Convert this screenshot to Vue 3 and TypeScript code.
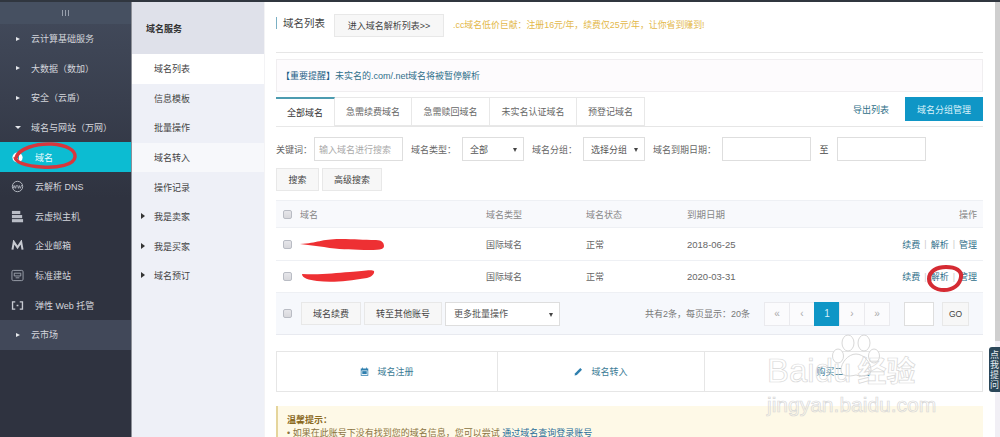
<script setup lang="ts">
type Nav = { label: string; kind: 'group' | 'open' | 'item' | 'active' | 'market'; icon?: string };

const navItems: Nav[] = [
  { label: '云计算基础服务', kind: 'group' },
  { label: '大数据（数加）', kind: 'group' },
  { label: '安全（云盾）', kind: 'group' },
  { label: '域名与网站（万网）', kind: 'open' },
  { label: '域名', kind: 'active', icon: 'domain' },
  { label: '云解析 DNS', kind: 'item', icon: 'dns' },
  { label: '云虚拟主机', kind: 'item', icon: 'host' },
  { label: '企业邮箱', kind: 'item', icon: 'mail' },
  { label: '标准建站', kind: 'item', icon: 'site' },
  { label: '弹性 Web 托管', kind: 'item', icon: 'web' },
  { label: '云市场', kind: 'market' },
];

const subItems = [
  { label: '域名列表', current: true },
  { label: '信息模板' },
  { label: '批量操作' },
  { label: '域名转入', light: true },
  { label: '操作记录' },
  { label: '我是卖家', arrow: true },
  { label: '我是买家', arrow: true },
  { label: '域名预订', arrow: true },
];

const tabs = [
  { label: '全部域名', w: 59 },
  { label: '急需续费域名', w: 77 },
  { label: '急需赎回域名', w: 78 },
  { label: '未实名认证域名', w: 87 },
  { label: '预登记域名', w: 68 },
];

const rows = [
  { date: '2018-06-25', h: 33 },
  { date: '2020-03-31', h: 32 },
];

const pages = ['«', '‹', '1', '›', '»'];
</script>

<template>
  <div class="page">
    <aside class="nav">
      <div class="toggle">
        <i></i><i></i><i></i>
      </div>
      <div v-for="n in navItems" :key="n.label" class="nav-row" :class="n.kind">
        <span v-if="n.kind === 'group' || n.kind === 'market'" class="tri"></span>
        <span v-else-if="n.kind === 'open'" class="tri down"></span>
        <span v-else class="nav-icon">
          <svg v-if="n.icon === 'domain'" viewBox="0 0 14 14" width="13" height="13">
            <circle cx="7" cy="7" r="5.5" fill="#fff" />
            <path d="M6 3.5v7M8 4.5v5" stroke="#12b5cf" stroke-width="1.1" />
          </svg>
          <svg v-else-if="n.icon === 'dns'" viewBox="0 0 14 14" width="13" height="13" fill="none" stroke="#b9bdc6" stroke-width="1">
            <circle cx="7" cy="7" r="5.6" />
            <path d="M2 5.5l1 3.5 1-3 1 3 1-3.500M7 5.500l1 3.500 1-3 1 3 1.500-3.500" stroke-width=".8" />
          </svg>
          <svg v-else-if="n.icon === 'host'" viewBox="0 0 14 14" width="13" height="13" fill="#b9bdc6">
            <rect x="1" y="1" width="9" height="3.400" />
            <rect x="1" y="5.400" width="11" height="3.400" />
            <rect x="1" y="9.800" width="12" height="3.400" />
          </svg>
          <svg v-else-if="n.icon === 'mail'" viewBox="0 0 14 12" width="13" height="11" fill="none" stroke="#c8cbd2" stroke-width="2.200">
            <path d="M1.500 10.500L3 2l4 6 4-6 1.500 8.500" />
          </svg>
          <svg v-else-if="n.icon === 'site'" viewBox="0 0 14 14" width="13" height="13" fill="none" stroke="#9ea3ae" stroke-width="1">
            <rect x="1" y="1.500" width="12" height="11" rx="1.500" />
            <path d="M3.500 4.500h7v3h-7zM5 9.500h4" />
          </svg>
          <svg v-else viewBox="0 0 14 10" width="13" height="9" fill="none" stroke="#c8cbd2" stroke-width="1.500">
            <path d="M4.500 1H1.500v8h3M9.500 1h3v8h-3M6 5h2" />
          </svg>
        </span>
        <span class="nav-label">{{ n.label }}</span>
      </div>
    </aside>

    <aside class="sub">
      <div class="sub-head">域名服务</div>
      <div
        v-for="s in subItems"
        :key="s.label"
        class="sub-row"
        :class="{ current: s.current, light: s.light }"
      >
        <span v-if="s.arrow" class="sub-tri"></span>
        {{ s.label }}
      </div>
    </aside>

    <main class="main">
      <div class="head">
        <h1 class="title">域名列表</h1>
        <button class="btn enter">进入域名解析列表&gt;&gt;</button>
        <span class="promo">.cc域名低价巨献：注册16元/年，续费仅25元/年，让你省到赚到!</span>
      </div>

      <div class="notice"><b>【重要提醒】</b>未实名的.com/.net域名将被暂停解析</div>

      <div class="tabbar">
        <div
          v-for="(t, i) in tabs"
          :key="t.label"
          class="tab"
          :class="{ on: i === 0 }"
          :style="{ width: t.w + 'px' }"
        >{{ t.label }}</div>
        <div class="tab-tools">
          <a class="export">导出列表</a>
          <button class="group-btn">域名分组管理</button>
        </div>
      </div>

      <div class="filters">
        <label class="lb l1">关键词：</label>
        <div class="field kw">输入域名进行搜索</div>
        <label class="lb l2">域名类型：</label>
        <div class="field sel">全部<span class="caret"></span></div>
        <label class="lb l2">域名分组：</label>
        <div class="field sel">选择分组<span class="caret"></span></div>
        <label class="lb l2">域名到期日期：</label>
        <div class="field date"></div>
        <span class="to">至</span>
        <div class="field date"></div>
      </div>

      <div class="search-row">
        <button class="btn search">搜索</button>
        <button class="btn adv">高级搜索</button>
      </div>

      <div class="table">
        <div class="tr th">
          <span class="cb"></span>
          <span class="c-name">域名</span>
          <span class="c-type">域名类型</span>
          <span class="c-state">域名状态</span>
          <span class="c-date">到期日期</span>
          <span class="c-op">操作</span>
        </div>
        <div v-for="r in rows" :key="r.date" class="tr td" :style="{ height: r.h + 'px' }">
          <span class="cb"></span>
          <span class="c-name"></span>
          <span class="c-type">国际域名</span>
          <span class="c-state">正常</span>
          <span class="c-date">{{ r.date }}</span>
          <span class="c-op"><a>续费</a><em>|</em><a>解析</a><em>|</em><a>管理</a></span>
        </div>
        <div class="tr foot">
          <span class="cb"></span>
          <button class="btn renew">域名续费</button>
          <button class="btn move">转至其他账号</button>
          <div class="field batch">更多批量操作<span class="caret"></span></div>
          <span class="total">共有2条，每页显示：20条</span>
          <div class="pager">
            <span v-for="p in pages" :key="p" class="pg" :class="{ on: p === '1' }">{{ p }}</span>
          </div>
          <div class="field jump"></div>
          <button class="btn go">GO</button>
        </div>
      </div>

      <div class="actions">
        <div class="act a1">
          <svg viewBox="0 0 12 12" width="9" height="9" fill="#2f7fae">
            <path d="M1 2h2V.8h1V2h4V.8h1V2h2v9.500H1zM2 4.500v6h8v-6z" />
            <path d="M3 5.500h6v4H3z" />
          </svg>
          域名注册
        </div>
        <div class="act a2">
          <svg viewBox="0 0 12 12" width="9" height="9" fill="#2f7fae">
            <path d="M.8 11.200l.7-3L8.400 1.300l2.300 2.300-6.900 6.900z" />
          </svg>
          域名转入
        </div>
        <div class="act a3">购买二手域名</div>
      </div>

      <div class="tips">
        <b>温馨提示：</b>
        <p>• 如果在此账号下没有找到您的域名信息，您可以尝试 <a>通过域名查询登录账号</a></p>
      </div>
    </main>

    <div class="scroll"></div>

    <!-- hand drawn marks on top of the screenshot -->
    <svg class="marks" width="1000" height="437" viewBox="0 0 1000 437" fill="none">
      <path d="M16 158c2-9 20-15 36-14 14 1 24 6 23 13-1 8-17 11-33 10-15-1-26-4-27-10" stroke="#d8363c" stroke-width="3.500" />
      <path d="M300 244c18-1 21-5 40-5 16 0 22 1 36 1 6 0 8 3 8 6 0 4-5 4-20 4-16-1-24 0-40-3-8-1-16-2-24-3z" fill="#ee3033" />
      <path d="M302 274c20 1 32-1 48-2 12-1 22-3 24-1 1 3-3 6-7 7-20 3-34 5-50 3-8-1-15-3-15-7z" fill="#ee3033" />
      <path d="M929 279c0-8 8-12 17-12 10 0 16 4 15 10-1 8-8 13-17 13-9 0-15-5-15-11z" stroke="#d52b33" stroke-width="4" />
    </svg>

    <div class="help">点我提问</div>

    <div class="mark">
      <svg class="paw" viewBox="0 0 50 46" width="50" height="46" fill="#fff" stroke="#d8d8d8" stroke-width="1">
        <ellipse cx="17" cy="10" rx="6" ry="8" />
        <ellipse cx="33" cy="10" rx="6" ry="8" />
        <ellipse cx="7" cy="23" rx="5.500" ry="7" />
        <ellipse cx="43" cy="23" rx="5.500" ry="7" />
        <path d="M25 21c8 0 15 9 15 16 0 6-7 7-15 5-8 2-15 1-15-5 0-7 7-16 15-16z" />
      </svg>
      <div class="mark-top">Bai<span class="gap"></span>du<span class="cn">经验</span></div>
      <div class="mark-url">jingyan.baidu.com</div>
    </div>
  </div>
</template>

<style>
html,
body {
  margin: 0;
  background: #fff;
}
</style>

<style scoped>
.page {
  position: relative;
  display: flex;
  width: 1000px;
  height: 437px;
  overflow: hidden;
  border-top: 2px solid #30363f;
  box-sizing: border-box;
  background: #fff;
  font-family: "Liberation Sans", "Noto Sans CJK SC", sans-serif;
  font-size: 9px;
  color: #555;
}
button {
  font: inherit;
  margin: 0;
}

/* left nav */
.nav {
  flex: none;
  width: 131px;
  background: linear-gradient(#434b5c, #2f3340 45%, #2f3340);
  border-right: 1px solid #8d9098;
  color: #d4d6dc;
}
.toggle {
  height: 22px;
  display: flex;
  justify-content: center;
  align-items: center;
  gap: 2px;
  background: #465061;
}
.toggle i {
  width: 1px;
  height: 6px;
  background: #98a0ad;
}
.nav-row {
  height: 29.6px;
  display: flex;
  align-items: center;
  padding-left: 16px;
}
.nav-row.item,
.nav-row.active {
  padding-left: 11px;
}
.nav-row.active {
  background: #0cbcd2;
  color: #e8fbff;
}
.nav-row.market {
  background: #414859;
}
.tri {
  width: 0;
  height: 0;
  margin-right: 11px;
  border-left: 4px solid #e6e8ec;
  border-top: 2.500px solid transparent;
  border-bottom: 2.500px solid transparent;
}
.tri.down {
  margin-right: 10px;
  margin-left: -1px;
  border-top: 3px solid #e6e8ec;
  border-bottom: 0;
  border-left: 3px solid transparent;
  border-right: 3px solid transparent;
}
.nav-icon {
  width: 13px;
  height: 13px;
  margin-right: 11px;
  display: flex;
  align-items: center;
  justify-content: center;
}

/* second column */
.sub {
  flex: none;
  width: 133px;
  background: #eef0f7;
  border-right: 1px solid #f3f3f5;
  box-sizing: border-box;
  color: #444;
}
.sub-head {
  height: 52px;
  display: flex;
  align-items: center;
  padding-left: 14px;
  background: #dfe1ea;
  font-weight: bold;
  color: #333;
}
.sub-row {
  position: relative;
  height: 29.6px;
  display: flex;
  align-items: center;
  padding-left: 22px;
}
.sub-row.current {
  background: #fff;
}
.sub-row.light {
  background: #f7f8fb;
}
.sub-tri {
  position: absolute;
  left: 9px;
  top: 11px;
  border-left: 4px solid #333;
  border-top: 3px solid transparent;
  border-bottom: 3px solid transparent;
}

/* main */
.main {
  flex: none;
  width: 718px;
  padding-left: 11px;
  box-sizing: border-box;
}
.head {
  height: 51px;
  display: flex;
  align-items: flex-start;
  padding-top: 12px;
  box-sizing: border-box;
  border-bottom: 1px solid #e6e6e6;
}
.title {
  margin: 3px 0 0;
  padding-left: 6px;
  width: 51px;
  height: 12px;
  line-height: 12px;
  box-sizing: content-box;
  flex: none;
  border-left: 1px solid #7bb0c4;
  font-size: 10.500px;
  font-weight: normal;
  color: #444;
}
.btn {
  height: 23px;
  padding: 0;
  background: #f7f7f7;
  border: 1px solid #e8e8e8;
  color: #444;
  font-size: 9px;
}
.enter {
  width: 110px;
}
.promo {
  margin-left: 9px;
  line-height: 23px;
  color: #e3b84a;
  font-size: 8.900px;
  white-space: nowrap;
}
.notice {
  width: 707px;
  height: 33px;
  margin-top: 6px;
  padding-left: 10px;
  box-sizing: border-box;
  display: flex;
  align-items: center;
  background: #fdfbfd;
  border: 1px solid #f0eef0;
  color: #2f6f8a;
}
.notice b {
  margin-left: -6px;
  font-weight: normal;
  color: #1c5f86;
}
.tabbar {
  width: 707px;
  height: 30px;
  margin-top: 5px;
  display: flex;
  border-bottom: 1px solid #e6e6e6;
  box-sizing: border-box;
}
.tab {
  height: 29px;
  display: flex;
  align-items: center;
  justify-content: center;
  box-sizing: border-box;
  border: 1px solid #e8e8e8;
  border-left: 0;
  color: #666;
}
.tab.on {
  height: 30px;
  background: #fff;
  border-top: 2px solid #4d9cb0;
  border-right: 1px solid #e8e8e8;
  color: #333;
}
.tab-tools {
  margin-left: auto;
  display: flex;
  gap: 16px;
  height: 24px;
  align-items: center;
}
.export {
  color: #2f7088;
}
.group-btn {
  width: 78px;
  height: 24px;
  border: 0;
  padding: 0;
  background: #0f96c6;
  color: #d8f1fa;
  font-size: 9px;
}
.filters {
  height: 24px;
  margin-top: 10px;
  display: flex;
  align-items: center;
}
.lb {
  flex: none;
  color: #666;
}
.l1 {
  width: 38px;
}
.l2 {
  margin: 0 6px 0 8px;
}
.field {
  position: relative;
  flex: none;
  height: 24px;
  box-sizing: border-box;
  border: 1px solid #dedede;
  background: #fff;
  display: flex;
  align-items: center;
  color: #555;
}
.kw {
  width: 89px;
  padding-left: 4px;
  color: #aaa;
}
.sel {
  width: 62px;
  padding-left: 7px;
}
.caret {
  position: absolute;
  right: 6px;
  top: 10px;
  border-top: 4px solid #444;
  border-left: 2.500px solid transparent;
  border-right: 2.500px solid transparent;
}
.date {
  width: 89px;
}
.to {
  width: 26px;
  text-align: center;
  color: #444;
}
.search-row {
  margin-top: 7px;
  display: flex;
  gap: 3px;
}
.search {
  width: 43px;
}
.adv {
  width: 60px;
}

/* table */
.table {
  width: 707px;
  margin-top: 9px;
  border-bottom: 1px solid #e8eaf0;
}
.tr {
  display: flex;
  align-items: center;
  padding-left: 7px;
  border-top: 1px solid #eef0f4;
  box-sizing: border-box;
}
.th {
  height: 27px;
  background: #f8f9fc;
  color: #888;
}
.td {
  color: #666;
}
.cb {
  flex: none;
  width: 9px;
  height: 9px;
  border: 1px solid #b9bcc4;
  border-radius: 2px;
  background: linear-gradient(#e6e6ea, #d8d8dc);
  box-sizing: border-box;
}
.c-name {
  width: 186px;
  margin-left: 8px;
  flex: none;
}
.c-type {
  width: 100px;
  flex: none;
}
.c-state {
  width: 101px;
  flex: none;
}
.c-date {
  width: 120px;
  flex: none;
  font-size: 9.500px;
}
.c-op {
  margin-left: auto;
  padding-right: 6px;
  display: flex;
  align-items: center;
  color: #2f6f8a;
}
.th .c-op {
  color: #888;
}
.c-op em {
  margin: 0 4px;
  font-style: normal;
  color: #ccc;
}
.foot {
  height: 42px;
  background: #f6f8fc;
}
.renew {
  width: 60px;
  margin-left: 9px;
}
.move {
  width: 78px;
  margin-left: 3px;
}
.batch {
  width: 115px;
  height: 24px;
  margin-left: 3px;
  padding-left: 8px;
}
.total {
  margin-left: 85px;
  color: #777;
  white-space: nowrap;
}
.pager {
  display: flex;
  margin-left: 15px;
  height: 24px;
}
.pg {
  width: 24px;
  display: flex;
  align-items: center;
  justify-content: center;
  background: #fbfbfd;
  border: 1px solid #eaeaee;
  margin-left: -1px;
  color: #aaa;
  box-sizing: content-box;
  height: 22px;
  font-size: 10px;
}
.pg.on {
  background: #0f96c6;
  border-color: #0f96c6;
  color: #d8f1fa;
}
.jump {
  width: 30px;
  margin-left: 14px;
}
.go {
  width: 27px;
  height: 24px;
  margin-left: 8px;
  background: #f7f7f7;
  font-size: 8.500px;
}

/* bottom */
.actions {
  width: 707px;
  height: 41px;
  margin-top: 16px;
  display: flex;
  border: 1px solid #e6e6e6;
  box-sizing: border-box;
}
.act {
  display: flex;
  align-items: center;
  justify-content: center;
  gap: 8px;
  color: #3a7a95;
  border-right: 1px solid #e6e6e6;
}
.a1 {
  width: 220px;
}
.a2 {
  width: 206px;
}
.a3 {
  flex: 1;
  border-right: 0;
  padding-left: 0;
}
.tips {
  width: 707px;
  height: 60px;
  margin-top: 14px;
  padding: 8px 0 0 9px;
  box-sizing: border-box;
  background: #fef9e7;
  border-left: 2px solid #e5d59c;
  color: #8a7340;
  line-height: 13px;
}
.tips b {
  color: #8b6a1f;
}
.tips p {
  margin: 0;
}
.tips a {
  color: #2b6f9a;
}

/* page scrollbar */
.scroll {
  position: absolute;
  right: 0;
  top: 0;
  width: 15px;
  height: 435px;
  background: linear-gradient(to right, #fff 10px, #cfcfcf 10px);
}
.scroll::after {
  content: "";
  position: absolute;
  left: 10px;
  right: 0;
  top: 339px;
  bottom: 0;
  background: #f1eff5;
}
.marks {
  position: absolute;
  left: 0;
  top: -2px;
  pointer-events: none;
}
.help {
  position: absolute;
  right: 0;
  top: 345px;
  width: 11px;
  height: 45px;
  box-sizing: border-box;
  padding-top: 3px;
  background: #2b4759;
  border-radius: 3px 0 0 3px;
  color: #e8eef2;
  font-size: 9px;
  line-height: 10px;
  text-align: center;
}

/* watermark */
.mark {
  position: absolute;
  left: 767px;
  top: 333px;
  width: 190px;
  height: 90px;
  pointer-events: none;
  color: transparent;
  -webkit-text-stroke: 0.700px #d8d8d8;
}
.paw {
  position: absolute;
  left: 64px;
  top: -2px;
}
.mark-top {
  position: relative;
  margin-top: 18px;
  font-size: 33px;
  line-height: 36px;
  white-space: nowrap;
}
.gap {
  display: inline-block;
  width: 0;
}
.cn {
  margin-left: 6px;
  font-size: 29px;
  font-weight: bold;
}
.mark-url {
  position: relative;
  margin-top: 3px;
  font-size: 21px;
  line-height: 24px;
  white-space: nowrap;
}
</style>
